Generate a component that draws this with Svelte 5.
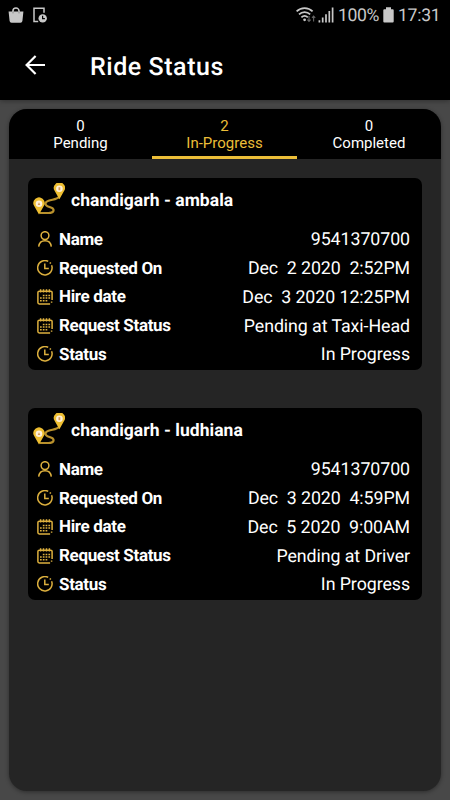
<script lang="ts">
  type IconName = 'user' | 'clock' | 'calendar';

  interface Field {
    icon: IconName;
    label: string;
    value: string;
  }

  interface Ride {
    route: string;
    fields: Field[];
  }

  const tabs = [
    { id: 'pending', label: 'Pending', count: 0 },
    { id: 'progress', label: 'In-Progress', count: 2 },
    { id: 'completed', label: 'Completed', count: 0 },
  ];

  function ride(route: string, name: string, requested: string, hire: string, request: string, status: string): Ride {
    return {
      route,
      fields: [
        { icon: 'user', label: 'Name', value: name },
        { icon: 'clock', label: 'Requested On', value: requested },
        { icon: 'calendar', label: 'Hire date', value: hire },
        { icon: 'calendar', label: 'Request Status', value: request },
        { icon: 'clock', label: 'Status', value: status },
      ],
    };
  }

  const rides = [
    ride('chandigarh - ambala', '9541370700', 'Dec  2 2020  2:52PM', 'Dec  3 2020 12:25PM', 'Pending at Taxi-Head', 'In Progress'),
    ride('chandigarh - ludhiana', '9541370700', 'Dec  3 2020  4:59PM', 'Dec  5 2020  9:00AM', 'Pending at Driver', 'In Progress'),
  ];

  let activeTab = $state('progress');
</script>

{#snippet fieldIcon(name: IconName)}
  <svg class="field-icon" viewBox="0 0 16 16">
    {#if name === 'user'}
      <circle cx="8" cy="4.6" r="3.9" />
      <path d="M1.7 15.6C2.2 11.6 4.5 9.8 8 9.8s5.8 1.8 6.3 5.8" />
    {:else if name === 'clock'}
      <path d="M11.2 1.4A7.2 7.2 0 1 0 14.6 5.2" />
      <path d="M12.8 2.4l1 1.1" />
      <path d="M7.8 3.4v5h4" />
    {:else}
      <path d="M15.1 11V3.6a1.4 1.4 0 0 0-1.4-1.4H2.3A1.4 1.4 0 0 0 .9 3.6v10a1.4 1.4 0 0 0 1.4 1.4h10.8M14.6 12.6v1.2" />
      <path d="M3.6.2v3.2M6.5.2v3.2M9.5.2v3.2M12.4.2v3.2" />
      <path class="dots" d="M5.8 6.4h7.4M3 9.1h10.2M3 11.8h7.4" />
    {/if}
  </svg>
{/snippet}

<div class="screen">
  <header>
    <div class="status-bar">
      <svg class="bag" viewBox="0 0 16 16">
        <path d="M4.9 7V4.2a3.1 3.1 0 0 1 6.2 0V7" fill="none" stroke="#c8c8c8" stroke-width="1.5" />
        <path d="M.6 4.6h14.8l-1 9.4a2 2 0 0 1-2 1.8H3.6a2 2 0 0 1-2-1.8z" fill="#c8c8c8" />
        <path d="M5 4.8v1.6M11 4.8v1.6" stroke="#777" stroke-width=".8" />
      </svg>
      <svg class="device" viewBox="0 0 14 16">
        <path d="M5.2 14.4H1V1.2h10v4.6" fill="none" stroke="#c8c8c8" stroke-width="1.5" />
        <circle cx="9.7" cy="11.4" r="4.2" fill="#c8c8c8" />
        <path d="M9.6 8.8v2.8h2.3" fill="none" stroke="#000" stroke-width="1.2" />
      </svg>
      <div class="status-right">
        <svg class="wifi" viewBox="0 0 20 16">
          <g fill="none" stroke="#c8c8c8" stroke-width="1.7">
            <path d="M.6 4.4C5 0 12.2 0 16.6 4.4" />
            <path d="M3 7.4c3.2-3.1 8-3.1 11.2 0" />
            <path d="M5.4 10.4c2-2 4.4-2 6.4 0" />
          </g>
          <circle cx="8.6" cy="12.8" r="1.4" fill="#c8c8c8" />
          <path d="M13 9v5.4M11.4 12.6l1.6 1.8 1.6-1.8M17.6 14.4V9M16 10.8L17.6 9l1.6 1.8" fill="none" stroke="#666" stroke-width="1.1" />
        </svg>
        <svg class="signal" viewBox="0 0 16 16">
          <path d="M1.4 15.4v-2.2M4.7 15.4v-4.8M8 15.4V7.2M11.3 15.4V4M14.6 15.4V.6" fill="none" stroke="#c8c8c8" stroke-width="1.7" />
        </svg>
        <span class="percent">100%</span>
        <svg class="battery" viewBox="0 0 11 16">
          <path d="M3 0.2h5v2.1h1.7q1 0 1 1v11.2q0 1-1 1H1.3q-1 0-1-1V3.3q0-1 1-1H3z" fill="#c8c8c8" />
        </svg>
        <span class="time">17:31</span>
      </div>
    </div>
    <div class="app-bar">
      <button class="back" aria-label="Back">
        <svg viewBox="0 0 20 20">
          <path d="M20 10H2.2M10.6 1L1.6 10l9 9" fill="none" stroke="#fff" stroke-width="2.2" />
        </svg>
      </button>
      <h1>Ride Status</h1>
    </div>
  </header>

  <main>
    <nav>
      {#each tabs as tab (tab.id)}
        <button class="tab" class:active={activeTab === tab.id} onclick={() => (activeTab = tab.id)}>
          <span>{tab.count}</span>
          <span>{tab.label}</span>
        </button>
      {/each}
    </nav>

    <div class="rides">
      {#if activeTab === 'progress'}
        {#each rides as item (item.route)}
          <section class="card">
            <div class="route">
              <svg class="route-icon" viewBox="0 0 32 32">
                <path d="M6.5 30h9c5.5 0 6.6-3.6 3-5.2l-4-1.6c-3.2-1.6-2.4-4.4 1-5.4 5.2-1.5 8.6-1.5 10.8-4" fill="none" stroke="#b9912c" stroke-width="2.2" />
                <path d="M6 31.4L1.2 23a5.6 5.6 0 1 1 9.6 0z" fill="#eebe31" />
                <circle cx="6" cy="20.8" r="3.3" fill="#fff0d8" />
                <path d="M4.7 22L6 19.2l1.3 2.8z" fill="#d89a55" />
                <path d="M26.4 16.2l-4.8-8.4a5.6 5.6 0 1 1 9.6 0z" fill="#eebe31" />
                <circle cx="26.4" cy="5.7" r="3.3" fill="#fff0d8" />
                <path d="M25.5 4.2h1.8v3h-1.8z" fill="#d89a55" />
              </svg>
              <h2>{item.route}</h2>
            </div>
            {#each item.fields as field (field.label)}
              <div class="field">
                {@render fieldIcon(field.icon)}
                <span class="label">{field.label}</span>
                <span class="value">{field.value}</span>
              </div>
            {/each}
          </section>
        {/each}
      {/if}
    </div>
  </main>
</div>

<style>
  :global(body) {
    background: #484848;
  }

  .screen {
    box-sizing: border-box;
    width: 450px;
    height: 800px;
    display: flex;
    flex-direction: column;
    overflow: hidden;
    background: #484848;
    color: #fff;
    font-family: Roboto, sans-serif;
    text-rendering: geometricPrecision;
  }

  button {
    padding: 0;
    border: 0;
    background: none;
    color: inherit;
    font: inherit;
  }

  header {
    height: 100px;
    background: #000;
    box-shadow: 0 1px 5px rgba(0, 0, 0, 0.35);
  }

  .status-bar {
    display: flex;
    align-items: center;
    height: 30px;
    padding: 0 9px 0 8px;
    color: #c8c8c8;
    font-size: 17.6px;
  }

  svg {
    display: block;
    flex-shrink: 0;
  }

  .bag {
    width: 16px;
    height: 16px;
    margin-right: 9px;
  }

  .device {
    width: 14px;
    height: 16px;
  }

  .status-right {
    display: flex;
    align-items: center;
    margin-left: auto;
  }

  .wifi {
    width: 20px;
    height: 16px;
    margin-right: 2px;
  }

  .signal {
    width: 16px;
    height: 16px;
    margin-right: 4px;
  }

  .percent {
    width: 41px;
    margin-right: 4px;
    padding-top: 2px;
    letter-spacing: -0.4px;
  }

  .battery {
    width: 11px;
    height: 16px;
    margin-right: 4px;
  }

  .time {
    width: 43px;
    padding-top: 2px;
    letter-spacing: -0.3px;
  }

  .app-bar {
    display: flex;
    align-items: center;
    height: 72px;
    padding-left: 25px;
  }

  .back svg {
    width: 20px;
    height: 20px;
    margin-bottom: 3px;
  }

  h1 {
    margin: 0 0 0 45px;
    padding-top: 2px;
    font-size: 25px;
    font-weight: 500;
    letter-spacing: 0.55px;
  }

  main {
    flex: 1;
    margin: 9px;
    overflow: hidden;
    border-radius: 18px;
    background: #252525;
    box-shadow: 0 1px 4px rgba(0, 0, 0, 0.4);
  }

  nav {
    display: grid;
    grid-template-columns: 143px 145px 144px;
    height: 50px;
    background: #000;
  }

  .tab {
    box-sizing: border-box;
    display: flex;
    flex-direction: column;
    align-items: center;
    padding-top: 9px;
    border-bottom: 3px solid transparent;
    font-size: 15px;
    line-height: 17px;
  }

  .tab.active {
    border-bottom-color: #ecbe38;
    color: #ecbe38;
  }

  .rides {
    display: flex;
    flex-direction: column;
    gap: 38px;
    padding: 19px 19px 0;
  }

  .card {
    box-sizing: border-box;
    height: 192px;
    padding: 0 12px 0 5px;
    border-radius: 7px;
    background: #000;
  }

  .route {
    display: flex;
    align-items: center;
    height: 47px;
  }

  .route-icon {
    width: 32px;
    height: 32px;
    margin: -5px 6px 0 0;
  }

  h2 {
    margin: -1px 0 0;
    font-size: 17.5px;
    font-weight: 700;
    letter-spacing: 0.04px;
  }

  .field {
    display: flex;
    align-items: center;
    height: 28.75px;
    padding-left: 4px;
  }

  .field-icon {
    width: 16px;
    height: 16px;
    margin-right: 6px;
    fill: none;
    stroke: #ddb03e;
    stroke-width: 1.5;
  }

  .dots {
    stroke-width: 1.5;
    stroke-dasharray: 1.7 1.1;
  }

  .label {
    padding-top: 1px;
    font-size: 17px;
    font-weight: 700;
    letter-spacing: -0.34px;
  }

  .value {
    margin-left: auto;
    padding-top: 1px;
    font-size: 17.8px;
    letter-spacing: -0.07px;
    white-space: pre;
  }
</style>
